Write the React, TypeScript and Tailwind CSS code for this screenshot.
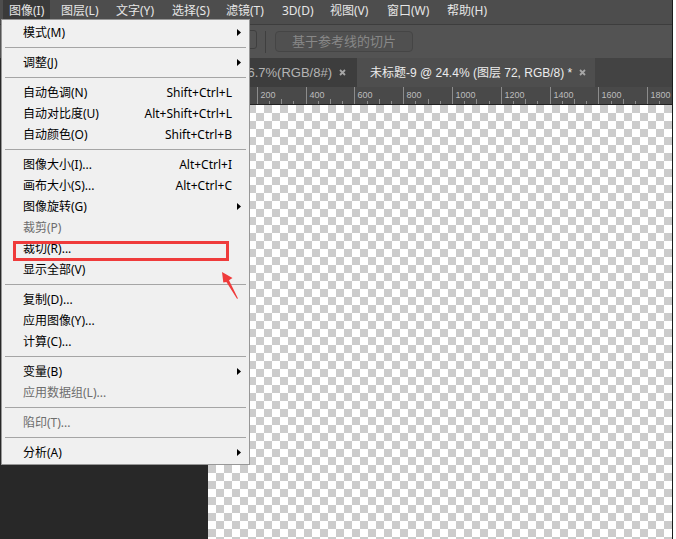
const menuBar = [
  { label: "图像(I)", w: "w-[52px]", active: true },
  { label: "图层(L)", w: "w-[55px]" },
  { label: "文字(Y)", w: "w-[56px]" },
  { label: "选择(S)", w: "w-[54px]" },
  { label: "滤镜(T)", w: "w-[56px]" },
  { label: "3D(D)", w: "w-[48px]" },
  { label: "视图(V)", w: "w-[57px]" },
  { label: "窗口(W)", w: "w-[60px]" },
  { label: "帮助(H)", w: "w-[60px]" },
];

type MenuItem =
  | "sep"
  | { label: string; shortcut?: string; sub?: boolean; disabled?: boolean };

const items: MenuItem[] = [
  { label: "模式(M)", sub: true },
  "sep",
  { label: "调整(J)", sub: true },
  "sep",
  { label: "自动色调(N)", shortcut: "Shift+Ctrl+L" },
  { label: "自动对比度(U)", shortcut: "Alt+Shift+Ctrl+L" },
  { label: "自动颜色(O)", shortcut: "Shift+Ctrl+B" },
  "sep",
  { label: "图像大小(I)...", shortcut: "Alt+Ctrl+I" },
  { label: "画布大小(S)...", shortcut: "Alt+Ctrl+C" },
  { label: "图像旋转(G)", sub: true },
  { label: "裁剪(P)", disabled: true },
  { label: "裁切(R)..." },
  { label: "显示全部(V)" },
  "sep",
  { label: "复制(D)..." },
  { label: "应用图像(Y)..." },
  { label: "计算(C)..." },
  "sep",
  { label: "变量(B)", sub: true },
  { label: "应用数据组(L)...", disabled: true },
  "sep",
  { label: "陷印(T)...", disabled: true },
  "sep",
  { label: "分析(A)", sub: true },
];

const rulerStep = 48.8;

function CloseX() {
  return (
    <svg width="7" height="7" viewBox="0 0 7 7" className="shrink-0">
      <path d="M1 1L6 6M6 1L1 6" stroke="#a6a6a6" strokeWidth="1.8" />
    </svg>
  );
}

function Ruler() {
  const ticks = [];
  for (let k = 0; k < 10; k++) {
    const x = Math.round(k * rulerStep) + 0.5;
    ticks.push(<line key={"m" + k} x1={x} y1={0} x2={x} y2={17} stroke="#8c8c8c" />);
    for (let q = 1; q < 4; q++) {
      const mx = Math.round(k * rulerStep + (q * rulerStep) / 4) + 0.5;
      ticks.push(
        <line key={`t${k}-${q}`} x1={mx} y1={q === 2 ? 12 : 14} x2={mx} y2={17} stroke="#8c8c8c" />
      );
    }
    if (k > 0) {
      ticks.push(
        <text key={"l" + k} x={x + 3} y={11} fontSize="9" fill="#bdbdbd" fontFamily="'Liberation Sans', sans-serif">
          {k * 200}
        </text>
      );
    }
  }
  return (
    <svg width="464" height="17" className="block">
      {ticks}
    </svg>
  );
}

export default function App() {
  return (
    <div className="w-[676px] h-[539px] bg-white font-['Noto_Sans','Noto_Sans_CJK_SC',sans-serif] relative overflow-hidden">
      <div className="w-[673px] h-[539px] border-r border-[#1c1c1c] flex flex-col bg-[#282828]">
        {/* Menu bar */}
        <div className="h-[25px] shrink-0 bg-[#4d4d4d] border-b border-[#3d3d3d] flex pl-[3px] text-[12px] text-[#e6e6e6]">
          {menuBar.map((m) => (
            <div key={m.label} className={`${m.w} flex`}>
              <span className={`px-[6px] h-[24px] leading-[21px] ${m.active ? "bg-[#3a3a3a]" : ""}`}>{m.label}</span>
            </div>
          ))}
        </div>

        {/* Options bar */}
        <div className="h-[33px] shrink-0 bg-[#535353] flex items-center">
          <div className="w-[150px] ml-[107px] h-[19px] mb-[4px] border border-[#3f3f3f] rounded-[3px]" />
          <div className="w-px h-[22px] bg-[#3f3f3f] ml-[8px]" />
          <div className="ml-[9px] w-[138px] h-[21px] border border-[#454545] rounded-[4px] bg-[#505050] flex items-center justify-center text-[13px] text-[#888888] leading-none">
            基于参考线的切片
          </div>
        </div>

        {/* Work area */}
        <div className="flex-1 flex min-h-0">
          <div className="w-[208px] shrink-0 bg-[#282828]" />
          <div className="flex-1 flex flex-col min-w-0">
            {/* Tabs */}
            <div className="h-[29px] shrink-0 bg-[#434343] flex text-[12px] whitespace-nowrap font-['Liberation_Sans','Noto_Sans_CJK_SC',sans-serif]">
              <div className="w-[149px] bg-[#3d3d3d] flex items-center justify-end overflow-hidden pr-[11px] gap-[7px] text-[#b4b4b4]">
                <span className="text-[13px]">未标题-8 @ 66.7%(RGB/8#)</span>
                <CloseX />
              </div>
              <div className="w-[238px] bg-[#4e4e4e] flex items-center pl-[13px] pr-[9px] text-[#ececec]">
                <span>未标题-9 @ 24.4% (图层 72, RGB/8) *</span>
                <span className="ml-auto">
                  <CloseX />
                </span>
              </div>
            </div>
            {/* Ruler */}
            <div className="h-[18px] shrink-0 bg-[#494949] border-b border-[#222222]">
              <Ruler />
            </div>
            {/* Canvas */}
            <div className="flex-1 bg-[conic-gradient(#cccccc_25%,#ffffff_0_50%,#cccccc_0_75%,#ffffff_0)] bg-[length:16px_16px]" />
          </div>
        </div>
      </div>

      {/* Image dropdown menu */}
      <div className="absolute left-[1px] top-[19px] w-[249px] bg-[#f0f0f0] border border-[#979797] pt-[2px] pb-[1px] text-[12px]">
        {items.map((it, i) =>
          it === "sep" ? (
            <div key={i} className="h-[9px] flex items-center px-[3px]">
              <div className="h-px w-full bg-[#a5a5a5]" />
            </div>
          ) : (
            <div
              key={i}
              className={`h-[21px] flex items-center pl-[21px] leading-[21px] ${it.disabled ? "text-[#6d6d6d]" : "text-black"}`}
            >
              <span className="flex-1">{it.label}</span>
              {it.shortcut && <span>{it.shortcut}</span>}
              <span className="w-[17px] pl-[5px] flex items-center">
                {it.sub && (
                  <svg width="4" height="7" viewBox="0 0 4 7">
                    <polygon points="0,0 4,3.5 0,7" fill="#000" />
                  </svg>
                )}
              </span>
            </div>
          )
        )}
      </div>

      {/* Annotation */}
      <div className="absolute left-[13px] top-[241px] w-[216px] h-[20px] border-[3px] border-[#ef3b3b]" />
      <svg className="absolute left-[215px] top-[268px]" width="30" height="35" viewBox="0 0 30 35">
        <polygon points="7,4 17.5,10 14,12.3 23,30.5 22,30.8 11.4,14 8.3,14.6" fill="#ef3b3b" />
      </svg>
    </div>
  );
}
